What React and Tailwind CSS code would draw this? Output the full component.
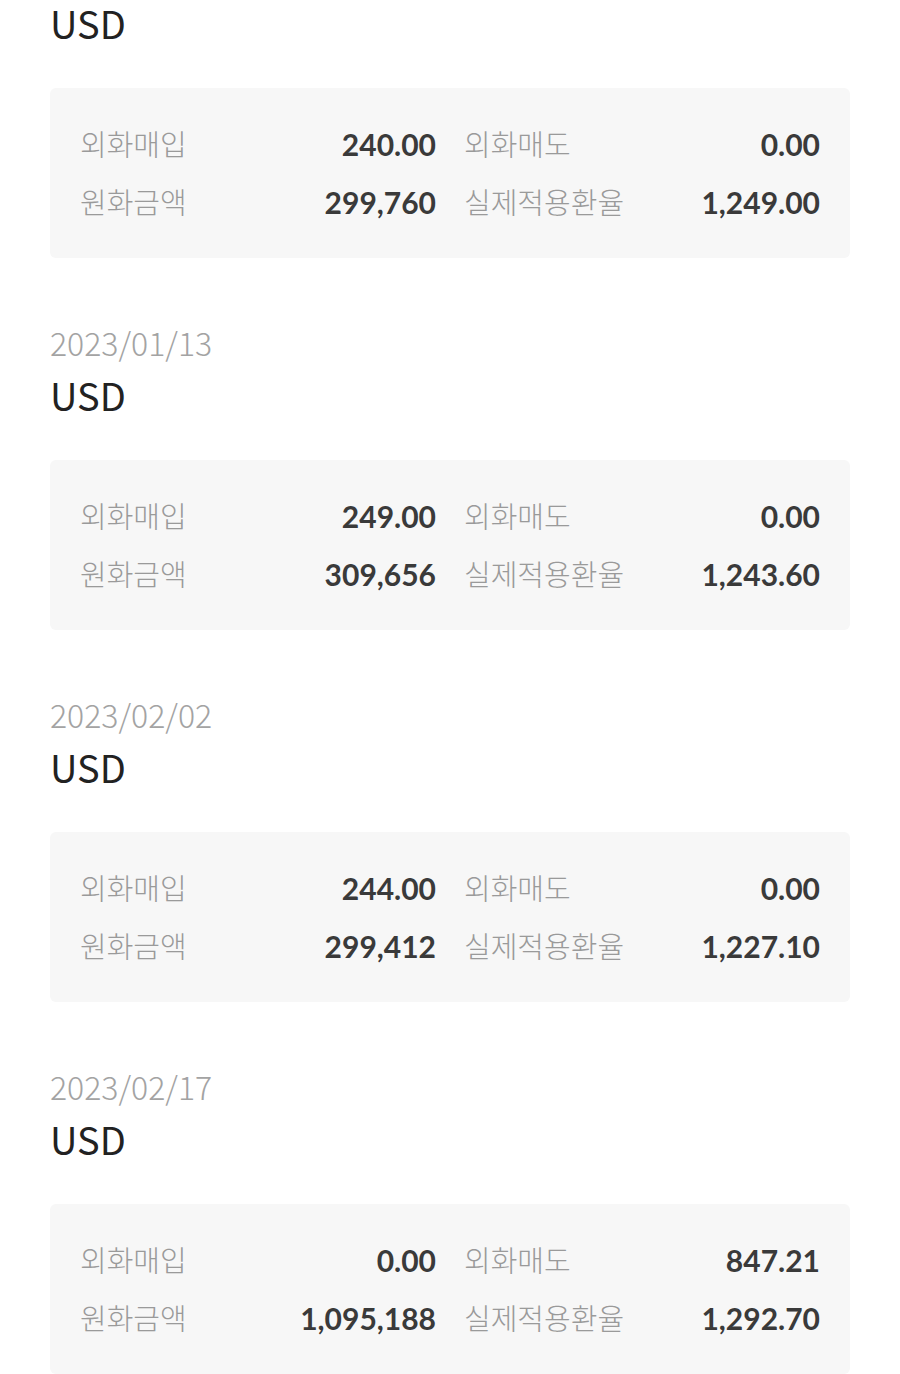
import React from "react";

const items = [
  { date: "2022/12/28", buy: "240.00", sell: "0.00", krw: "299,760", rate: "1,249.00" },
  { date: "2023/01/13", buy: "249.00", sell: "0.00", krw: "309,656", rate: "1,243.60" },
  { date: "2023/02/02", buy: "244.00", sell: "0.00", krw: "299,412", rate: "1,227.10" },
  { date: "2023/02/17", buy: "0.00", sell: "847.21", krw: "1,095,188", rate: "1,292.70" },
];

const kr = { fontFamily: '"Noto Sans CJK KR", "Noto Sans", sans-serif' };
const num = { fontFamily: 'Lato, "Noto Sans", sans-serif' };

function Cell({ label, value }) {
  return (
    <div className="flex items-center justify-between h-[58px]">
      <span className="text-[29px] text-[#9a9a9a] font-light" style={kr}>{label}</span>
      <span className="text-[30px] font-bold text-[#3a3a3a]" style={num}>{value}</span>
    </div>
  );
}

export default function App() {
  return (
    <div className="bg-white w-[900px] min-h-[1374px] overflow-hidden">
      <div className="mt-[-50px] px-[50px]">
        {items.map((it, i) => (
          <div key={i} className="mb-[64px]">
            <div className="h-[40px] leading-[40px] text-[32px] text-[#a3a3a3] font-light" style={kr}>{it.date}</div>
            <div className="h-[66px] leading-[66px] text-[38px] text-[#222222]" style={kr}>USD</div>
            <div className="mt-[32px] bg-[#f7f7f7] rounded-[6px] px-[30px] py-[27px]">
              <div className="grid grid-cols-2 gap-x-[28px]">
                <Cell label="외화매입" value={it.buy} />
                <Cell label="외화매도" value={it.sell} />
                <Cell label="원화금액" value={it.krw} />
                <Cell label="실제적용환율" value={it.rate} />
              </div>
            </div>
          </div>
        ))}
      </div>
    </div>
  );
}
